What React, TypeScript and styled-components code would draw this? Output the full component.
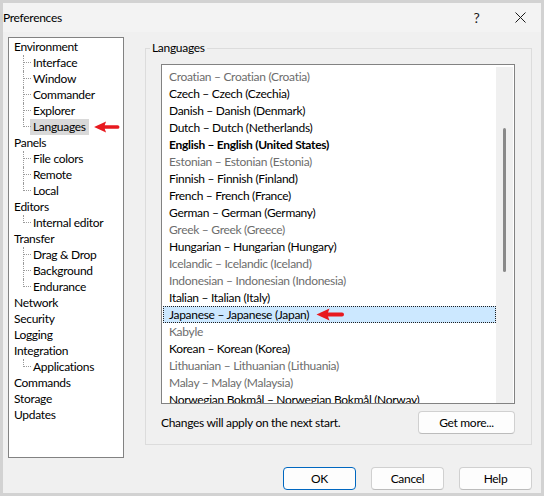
import React from 'react'
import styled, { createGlobalStyle } from 'styled-components'

const GlobalStyle = createGlobalStyle`
  html, body {
    margin: 0;
    padding: 0;
    background: #d2d2d2;
  }
  body {
    font-family: Lato, 'Noto Sans', 'Liberation Sans', sans-serif;
    font-size: 12px;
    letter-spacing: -0.3px;
    color: #000;
  }
`

const Window = styled.div`
  width: 544px;
  height: 496px;
  box-sizing: border-box;
  border: 3px solid #d2d2d2;
  background: #f0f0f0;
  display: flex;
  flex-direction: column;
`

const TitleBar = styled.div`
  height: 29px;
  display: flex;
  align-items: center;
  background: #f3f3f3;
`

const Title = styled.div`
  flex: 1;
  font-size: 12px;
`

const TitleButton = styled.div<{ $w: number }>`
  width: ${({ $w }) => $w}px;
  height: 100%;
  display: flex;
  align-items: center;
  justify-content: center;
  font-size: 14px;
  color: #1a1a1a;
`

const Content = styled.div`
  display: flex;
  align-items: flex-start;
  gap: 21px;
  padding: 5px 9px 0 5px;
`

const Tree = styled.div`
  width: 116px;
  height: 421px;
  box-sizing: border-box;
  border: 1px solid #828282;
  background: #fff;
  padding: 1px 0 0 5px;
`

const RootRow = styled.div`
  height: 16px;
  line-height: 16px;
  white-space: nowrap;
`

const ChildRow = styled.div`
  height: 16px;
  display: flex;
  align-items: center;
  padding-left: 9px;
  white-space: nowrap;
`

const Branch = styled.span<{ $last?: boolean }>`
  position: relative;
  flex-shrink: 0;
  width: 7px;
  align-self: flex-start;
  height: ${({ $last }) => ($last ? '8px' : '16px')};
  border-left: 1px dotted #9a9a9a;
  box-sizing: border-box;

  &::after {
    content: '';
    position: absolute;
    left: 0;
    top: 7px;
    width: 7px;
    border-top: 1px dotted #9a9a9a;
  }
`

const NodeLabel = styled.span<{ $selected?: boolean }>`
  flex-shrink: 0;
  height: 16px;
  line-height: 16px;
  padding: 0 3px;
  background: ${({ $selected }) => ($selected ? '#d9d9d9' : 'transparent')};
`

const Group = styled.fieldset`
  flex: 1;
  min-width: 0;
  margin: 4px 0 0;
  padding: 9px 16px 10px 15px;
  border: 1px solid #dcdcdc;
`

const GroupTitle = styled.legend`
  margin-left: -11px;
  padding: 0 2px;
  line-height: 14px;
  font-size: 12px;
`

const ListBox = styled.div`
  height: 340px;
  box-sizing: border-box;
  border: 1px solid #828282;
  background: #fff;
  display: flex;
  overflow: hidden;
`

const Rows = styled.div`
  flex: 1;
  padding: 3px 0 0 1px;
  overflow: hidden;
`

const Row = styled.div<{ $tone?: 'gray' | 'bold'; $selected?: boolean }>`
  height: 17px;
  line-height: 17px;
  padding-left: 6px;
  display: flex;
  align-items: center;
  white-space: nowrap;
  color: ${({ $tone }) => ($tone === 'gray' ? '#6d6d6d' : '#000')};
  font-weight: ${({ $tone }) => ($tone === 'bold' ? 700 : 400)};
  background: ${({ $selected }) => ($selected ? '#cce8ff' : 'transparent')};
  outline: ${({ $selected }) => ($selected ? '1px dotted #1f1f1f' : 'none')};
  outline-offset: -1px;
`

const ScrollBar = styled.div`
  width: 17px;
  margin: 2px 1px 0 0;
  background: #f0f0f0;
`

const Thumb = styled.div<{ $top: number; $height: number }>`
  margin: ${({ $top }) => $top}px 0 0 7px;
  width: 3px;
  height: ${({ $height }) => $height}px;
  border-radius: 2px;
  background: #8a8a8a;
`

const NoteRow = styled.div`
  display: flex;
  align-items: center;
  justify-content: space-between;
  margin-top: 7px;
`

const Button = styled.button<{ $primary?: boolean; $w?: number }>`
  width: ${({ $w }) => $w ?? 73}px;
  height: 23px;
  box-sizing: border-box;
  padding: 0;
  font-family: inherit;
  font-size: 12px;
  letter-spacing: inherit;
  color: #000;
  background: #fdfdfd;
  border: 1px solid ${({ $primary }) => ($primary ? '#0067c0' : '#d0d0d0')};
  border-bottom-color: ${({ $primary }) => ($primary ? '#0067c0' : '#bcbcbc')};
  border-radius: 4px;
`

const Footer = styled.div`
  display: flex;
  justify-content: flex-end;
  gap: 15px;
  padding: 9px 9px 0 0;
`

const ArrowSvg = styled.svg<{ $gap: number }>`
  margin-left: ${({ $gap }) => $gap}px;
  flex-shrink: 0;
`

const RedArrow = ({ w, h, gap }: { w: number; h: number; gap: number }) => (
  <ArrowSvg $gap={gap} width={w} height={h} viewBox="0 0 28 13">
    <path d="M0 6.5 L13 0.5 L11.5 4.5 H25.5 A2 2 0 0 1 25.5 8.5 H11.5 L13 12.5 Z" fill="#e8191f" />
  </ArrowSvg>
)

type Node = { label: string; children?: string[] }

const tree: Node[] = [
  { label: 'Environment', children: ['Interface', 'Window', 'Commander', 'Explorer', 'Languages'] },
  { label: 'Panels', children: ['File colors', 'Remote', 'Local'] },
  { label: 'Editors', children: ['Internal editor'] },
  { label: 'Transfer', children: ['Drag & Drop', 'Background', 'Endurance'] },
  { label: 'Network' },
  { label: 'Security' },
  { label: 'Logging' },
  { label: 'Integration', children: ['Applications'] },
  { label: 'Commands' },
  { label: 'Storage' },
  { label: 'Updates' },
]

type Lang = { text: string; tone?: 'gray' | 'bold'; selected?: boolean }

const languages: Lang[] = [
  { text: 'Croatian – Croatian (Croatia)', tone: 'gray' },
  { text: 'Czech – Czech (Czechia)' },
  { text: 'Danish – Danish (Denmark)' },
  { text: 'Dutch – Dutch (Netherlands)' },
  { text: 'English – English (United States)', tone: 'bold' },
  { text: 'Estonian – Estonian (Estonia)', tone: 'gray' },
  { text: 'Finnish – Finnish (Finland)' },
  { text: 'French – French (France)' },
  { text: 'German – German (Germany)' },
  { text: 'Greek – Greek (Greece)', tone: 'gray' },
  { text: 'Hungarian – Hungarian (Hungary)' },
  { text: 'Icelandic – Icelandic (Iceland)', tone: 'gray' },
  { text: 'Indonesian – Indonesian (Indonesia)', tone: 'gray' },
  { text: 'Italian – Italian (Italy)' },
  { text: 'Japanese – Japanese (Japan)', selected: true },
  { text: 'Kabyle', tone: 'gray' },
  { text: 'Korean – Korean (Korea)' },
  { text: 'Lithuanian – Lithuanian (Lithuania)', tone: 'gray' },
  { text: 'Malay – Malay (Malaysia)', tone: 'gray' },
  { text: 'Norwegian Bokmål – Norwegian Bokmål (Norway)' },
]

const App = () => {
  return (
    <>
      <GlobalStyle />
      <Window>
        <TitleBar>
          <Title>Preferences</Title>
          <TitleButton $w={45}>?</TitleButton>
          <TitleButton $w={42}>
            <svg width="11" height="11" viewBox="0 0 11 11">
              <path d="M0.5 0.5 L10.5 10.5 M10.5 0.5 L0.5 10.5" stroke="#1a1a1a" strokeWidth="1" />
            </svg>
          </TitleButton>
        </TitleBar>

        <Content>
          <Tree>
            {tree.map((node) => (
              <React.Fragment key={node.label}>
                <RootRow>{node.label}</RootRow>
                {node.children?.map((child, i) => {
                  const selected = child === 'Languages'
                  return (
                    <ChildRow key={child}>
                      <Branch $last={i === node.children!.length - 1} />
                      <NodeLabel $selected={selected}>{child}</NodeLabel>
                      {selected && <RedArrow w={26} h={12} gap={5} />}
                    </ChildRow>
                  )
                })}
              </React.Fragment>
            ))}
          </Tree>

          <Group>
            <GroupTitle>Languages</GroupTitle>
            <ListBox>
              <Rows>
                {languages.map((lang) => (
                  <Row key={lang.text} $tone={lang.tone} $selected={lang.selected}>
                    {lang.text}
                    {lang.selected && <RedArrow w={29} h={13} gap={7} />}
                  </Row>
                ))}
              </Rows>
              <ScrollBar>
                <Thumb $top={61} $height={144} />
              </ScrollBar>
            </ListBox>
            <NoteRow>
              <span>Changes will apply on the next start.</span>
              <Button $w={97}>Get more...</Button>
            </NoteRow>
          </Group>
        </Content>

        <Footer>
          <Button $primary>OK</Button>
          <Button>Cancel</Button>
          <Button>Help</Button>
        </Footer>
      </Window>
    </>
  )
}

export default App
